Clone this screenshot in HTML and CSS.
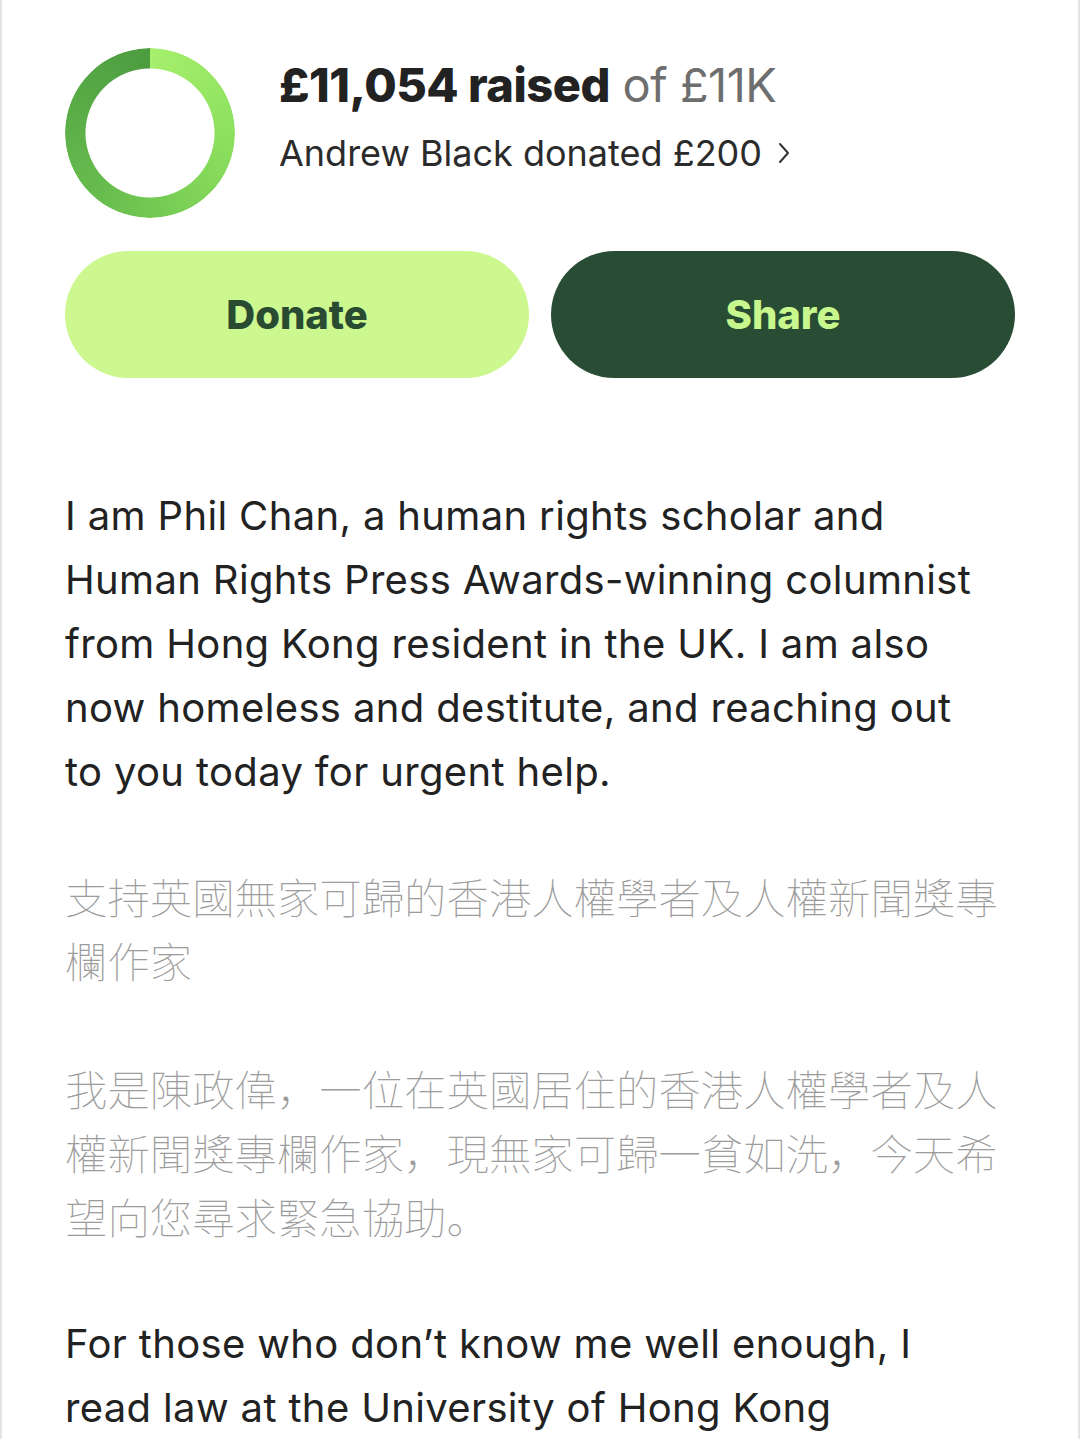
FILE: index.html
```html
<!DOCTYPE html>
<html lang="en">
<head>
<meta charset="UTF-8" />
<title>Fundraiser</title>
<link rel="stylesheet" href="styles.css">
</head>
<body>
<div class="page">

  <!-- progress summary -->
  <div class="summary">
    <div class="ring"></div>
    <div class="summary-text">
      <div class="raised"><b>£11,054 raised</b> <span class="goal">of £11K</span></div>
      <div class="latest">Andrew Black donated £200
        <svg class="chev" viewBox="0 0 12 22" width="12" height="22"><path d="M2 2l8 9-8 9" fill="none" stroke="#333" stroke-width="2" stroke-linecap="round" stroke-linejoin="round"/></svg>
      </div>
    </div>
  </div>

  <div class="actions">
    <button class="btn btn-donate">Donate</button>
    <button class="btn btn-share">Share</button>
  </div>

  <!-- story -->
  <div class="story">
    <p>I am Phil Chan, a human rights scholar and Human Rights Press Awards-winning columnist from Hong Kong resident in the UK. I am also now homeless and destitute, and reaching out to you today for urgent help.</p>
    <p class="zh">支持英國無家可歸的香港人權學者及人權新聞獎專欄作家</p>
    <p class="zh">我是陳政偉，一位在英國居住的香港人權學者及人權新聞獎專欄作家，現無家可歸一貧如洗，今天希望向您尋求緊急協助。</p>
    <p>For those who don’t know me well enough, I read law at the University of Hong Kong</p>
  </div>

</div>
</body>
</html>
```

FILE: styles.css
```css
html,body{margin:0;padding:0;background:#fff}
body{font-family:Inter,"Noto Sans",sans-serif;color:#222}
.page{min-height:1439px;box-sizing:border-box;border-left:2px solid #e4e4e4;border-right:2px solid #e4e4e4;
      padding:48px 63px 0 63px;overflow:hidden}

.summary{display:flex;align-items:flex-start;gap:44px}
.ring{width:170px;height:170px;border-radius:50%;flex:none;
      background:conic-gradient(from 0deg,#a5f06c,#84d95a 35%,#68bd4e 60%,#4c9c40 100%);
      -webkit-mask:radial-gradient(circle,transparent 64px,#000 65px);
      mask:radial-gradient(circle,transparent 64px,#000 65px)}
.summary-text{display:flex;flex-direction:column;gap:18px;margin-top:9px}
.raised{font-size:47px;letter-spacing:-0.5px;line-height:56px;color:#222}
.raised b{font-weight:800}
.goal{color:#6e6e6e;font-weight:400}
.latest{font-size:36px;color:#2b2b2b;line-height:44px;display:flex;align-items:center;gap:16px}

.actions{display:grid;grid-template-columns:1fr 1fr;gap:22px;margin-top:33px}
.btn{height:127px;border:none;border-radius:64px;font-family:Inter,sans-serif;font-weight:800;font-size:40px;cursor:pointer}
.btn-donate{background:#cdf78f;color:#284b31}
.btn-share{background:#284c34;color:#c8f78d}

.story{margin-top:106px}
.story p{margin:0 0 60px;max-width:925px;font-size:40px;letter-spacing:0.35px;line-height:64px;color:#222}
.story p.zh{max-width:none;font-family:"Noto Sans CJK SC",sans-serif;font-weight:100;font-size:42.4px;letter-spacing:0;color:#9c9c9c;line-height:64px;margin-bottom:64px}
```
